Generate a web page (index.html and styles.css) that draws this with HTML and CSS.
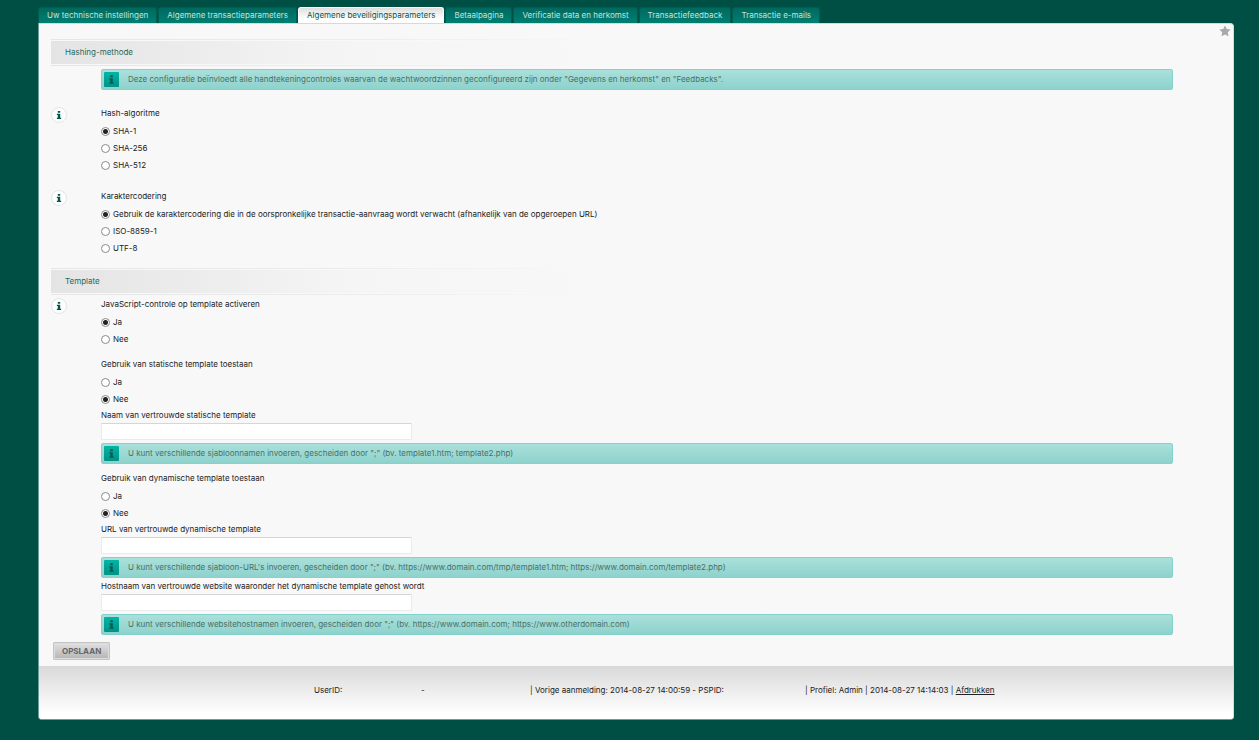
FILE: index.html
```html
<!DOCTYPE html>
<html lang="nl">
<head>
<meta charset="utf-8">
<title>Algemene beveiligingsparameters</title>
<link rel="stylesheet" href="styles.css">
</head>
<body>
<svg class="sprite" aria-hidden="true">
  <symbol id="info" viewBox="0 0 15 15"><path d="M6.2 3.2h2.6v2H6.2zM5.2 6.2h3.6v4.2h1v1.4H5.2v-1.4h1V7.5h-1z"/></symbol>
</svg>
<nav class="tabs">
  <a class="tab" href="#">Uw technische instellingen</a>
  <a class="tab" href="#">Algemene transactieparameters</a>
  <a class="tab active" href="#">Algemene beveiligingsparameters</a>
  <a class="tab" href="#">Betaalpagina</a>
  <a class="tab" href="#">Verificatie data en herkomst</a>
  <a class="tab" href="#">Transactiefeedback</a>
  <a class="tab" href="#">Transactie e-mails</a>
</nav>
<div class="panel">
  <button class="star" type="button" aria-label="Favoriet"><svg viewBox="0 0 12 12"><path d="M6 .4l1.7 3.6 3.9.5-2.8 2.8.7 4L6 9.4l-3.5 1.9.7-4L.4 4.5 4.3 4z"/></svg></button>
  <form class="settings">
    <h2 class="section">Hashing-methode</h2>
    <p class="note"><svg class="note-icon"><use href="#info"/></svg>Deze configuratie beïnvloedt alle handtekeningcontroles waarvan de wachtwoordzinnen geconfigureerd zijn onder "Gegevens en herkomst" en "Feedbacks".</p>

    <fieldset class="group spaced">
      <legend class="title"><svg class="help"><use href="#info"/></svg>Hash-algoritme</legend>
      <label class="option"><input type="radio" name="hash" checked>SHA-1</label>
      <label class="option"><input type="radio" name="hash">SHA-256</label>
      <label class="option"><input type="radio" name="hash">SHA-512</label>
    </fieldset>

    <fieldset class="group spaced">
      <legend class="title"><svg class="help"><use href="#info"/></svg>Karaktercodering</legend>
      <label class="option"><input type="radio" name="enc" checked>Gebruik de karaktercodering die in de oorspronkelijke transactie-aanvraag wordt verwacht (afhankelijk van de opgeroepen URL)</label>
      <label class="option"><input type="radio" name="enc">ISO-8859-1</label>
      <label class="option"><input type="radio" name="enc">UTF-8</label>
    </fieldset>

    <h2 class="section later">Template</h2>
    <fieldset class="group">
      <legend class="title"><svg class="help"><use href="#info"/></svg>JavaScript-controle op template activeren</legend>
      <label class="option"><input type="radio" name="js" checked>Ja</label>
      <label class="option"><input type="radio" name="js">Nee</label>
    </fieldset>

    <fieldset class="group near">
      <legend class="title">Gebruik van statische template toestaan</legend>
      <label class="option"><input type="radio" name="static">Ja</label>
      <label class="option"><input type="radio" name="static" checked>Nee</label>
    </fieldset>
    <div class="field">
      <label for="static-name">Naam van vertrouwde statische template</label>
      <input id="static-name" type="text">
    </div>
    <p class="note"><svg class="note-icon"><use href="#info"/></svg>U kunt verschillende sjabloonnamen invoeren, gescheiden door ";" (bv. template1.htm; template2.php)</p>

    <fieldset class="group near">
      <legend class="title">Gebruik van dynamische template toestaan</legend>
      <label class="option"><input type="radio" name="dynamic">Ja</label>
      <label class="option"><input type="radio" name="dynamic" checked>Nee</label>
    </fieldset>
    <div class="field">
      <label for="dynamic-url">URL van vertrouwde dynamische template</label>
      <input id="dynamic-url" type="text">
    </div>
    <p class="note"><svg class="note-icon"><use href="#info"/></svg>U kunt verschillende sjabloon-URL's invoeren, gescheiden door ";" (bv. https://www.domain.com/tmp/template1.htm; https://www.domain.com/template2.php)</p>
    <div class="field">
      <label for="host">Hostnaam van vertrouwde website waaronder het dynamische template gehost wordt</label>
      <input id="host" type="text">
    </div>
    <p class="note"><svg class="note-icon"><use href="#info"/></svg>U kunt verschillende websitehostnamen invoeren, gescheiden door ";" (bv. https://www.domain.com; https://www.otherdomain.com)</p>
    <button class="save" type="button">OPSLAAN</button>
  </form>
  <footer class="status">
    <span class="user">UserID:</span>
    <span class="name">-</span>
    <span class="login">| Vorige aanmelding: 2014-08-27 14:00:59 - PSPID:</span>
    <span>| Profiel: Admin | 2014-08-27 14:14:03 | <a href="#">Afdrukken</a></span>
  </footer>
</div>
</body>
</html>
```
FILE: styles.css
```css
* { box-sizing: border-box; }
body {
  margin: 0;
  padding: 7px 25px 20px 38px;
  background: #004f45;
  color: #222;
  font: 8px/17px Inter, Verdana, sans-serif;
}
.sprite { display: none; }

.tabs { display: flex; gap: 1px; }
.tab {
  padding: 0 8px;
  border: 1px solid #005d52;
  border-bottom: 0;
  border-radius: 3px 3px 0 0;
  background: linear-gradient(#00695e, #007f73);
  color: #c5e3df;
  line-height: 15px;
  text-decoration: none;
}
.tab.active {
  border-color: #fff;
  background: linear-gradient(#dedede, #fff 70%);
  color: #00594e;
}

.panel {
  position: relative;
  border: 1px solid #c9dfdc;
  border-left-color: #6d9c96;
  border-bottom-color: #6d9c96;
  border-radius: 0 4px 4px 4px;
  background: #f8f8f8;
  overflow: hidden;
}
.star {
  position: absolute;
  top: 1px;
  right: 2px;
  width: 12px;
  height: 12px;
  padding: 0;
  border: 0;
  background: none;
}
.star svg { display: block; width: 12px; height: 12px; fill: #a9a9a9; }

.settings { padding: 15px 13px 6px 12px; }
.section {
  margin: 0 0 3px;
  padding: 0 14px;
  height: 27px;
  border-top: 1px solid;
  border-bottom: 1px solid;
  border-image: linear-gradient(90deg, #e6e6e6, #ececec 300px, #f8f8f8 550px) 1;
  background: linear-gradient(90deg, #e4e4e4, #f5f5f5 300px, #f8f8f8 550px);
  box-shadow: inset 0 1px #f8f8f8, inset 0 -1px #f8f8f8;
  color: #1f6a60;
  font: inherit;
  line-height: 25px;
}
.section.later { margin: 11px 0 1px; }

.note {
  display: flex;
  align-items: center;
  gap: 9px;
  margin: 3px 47px 0 50px;
  padding: 0 2px;
  height: 21px;
  border: 1px solid #83d2cb;
  border-radius: 2px;
  background: linear-gradient(#aae0db, #8ed2cc);
  color: #4a7067;
}
.note-icon {
  flex: none;
  width: 15px;
  height: 15px;
  border-radius: 1px;
  background: linear-gradient(#00b5a6, #009387);
  fill: #005e53;
}

.group {
  margin: 0;
  padding: 0 0 0 50px;
  border: 0;
}
.group.spaced { margin-top: 14px; }
.note + .group.spaced { margin-top: 15px; }
.group.near { margin-top: 8px; }
.note + .group.near { margin-top: 6px; }
.title {
  position: relative;
  margin-bottom: 1px;
  padding: 0;
}
.help {
  position: absolute;
  top: 2px;
  left: -50px;
  width: 16px;
  height: 16px;
  border: 1px solid #e4e4e4;
  border-radius: 50%;
  background: #fff;
  fill: #00594e;
}
.option { display: flex; align-items: center; gap: 3px; }
.option input {
  appearance: none;
  margin: 0;
  width: 9px;
  height: 9px;
  border: 1px solid #8a8a8a;
  border-radius: 50%;
  background: #fff;
}
.option input:checked { background: radial-gradient(circle, #222 2px, #fff 3px); }

.field { padding-left: 50px; }
.field label { display: block; line-height: 15px; }
.field input {
  display: block;
  width: 311px;
  height: 17px;
  padding: 0 4px;
  border: 1px solid #ebebeb;
  border-top-color: #d6d6d6;
  border-radius: 1px;
  background: #fff;
  font: inherit;
}
.note + .field { margin-top: 1px; }

.save {
  display: block;
  margin: 7px 0 0 2px;
  padding: 0 8px;
  height: 18px;
  border: 1px solid #c4c4c4;
  border-radius: 1px;
  background: linear-gradient(#e2e2e2, #b4b4b4);
  box-shadow: inset 0 0 0 1px #dcdcdc;
  color: #666;
  font: bold 8px/16px Inter, Verdana, sans-serif;
}

.status {
  display: flex;
  padding: 16px 0 20px 275px;
  background: linear-gradient(#d9d9d9, #fff 90%);
}
.user { width: 107px; }
.name { width: 109px; }
.login { width: 275px; }
.status a { color: inherit; }
```
